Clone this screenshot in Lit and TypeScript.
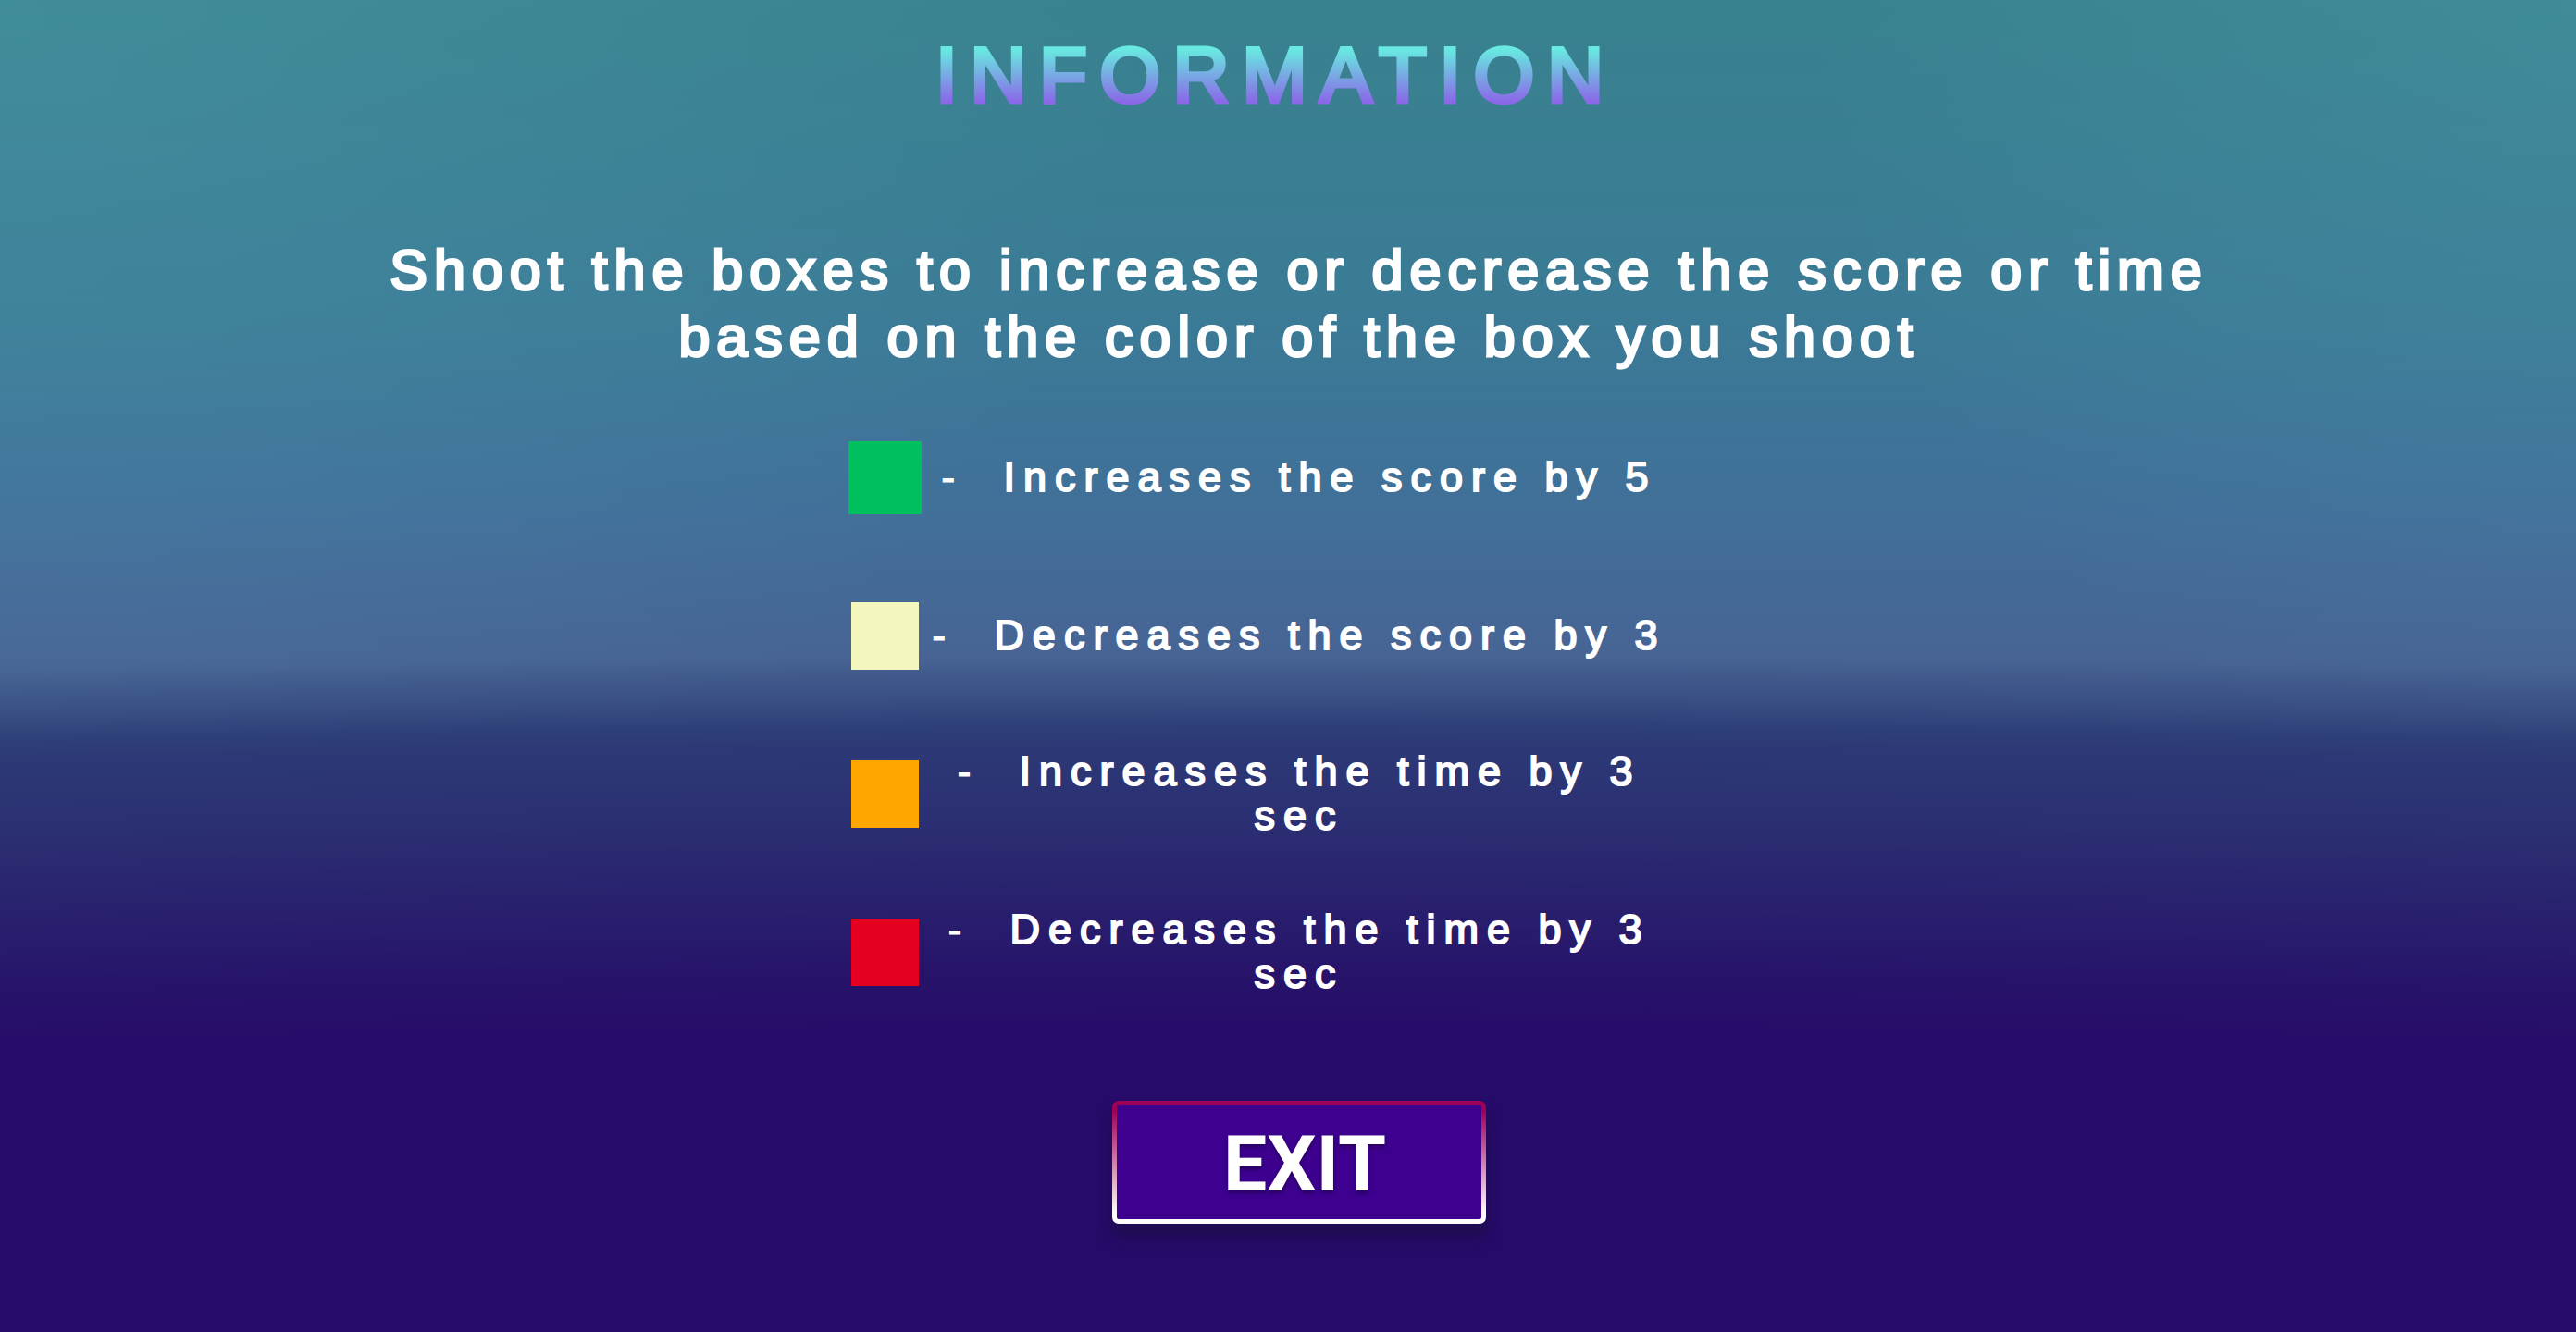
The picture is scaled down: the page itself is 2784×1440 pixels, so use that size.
import { LitElement, html, css } from "lit";
import { customElement } from "lit/decorators.js";
import { classMap } from "lit/directives/class-map.js";

interface Rule {
  tone: "green" | "cream" | "orange" | "red";
  text: string;
}

const RULES: Rule[] = [
  { tone: "green", text: "Increases the score by 5" },
  { tone: "cream", text: "Decreases the score by 3" },
  { tone: "orange", text: "Increases the time by 3 sec" },
  { tone: "red", text: "Decreases the time by 3 sec" },
];

@customElement("app-root")
export class AppRoot extends LitElement {
  static styles = css`
    :host {
      display: block;
    }
    * {
      box-sizing: border-box;
    }
    .screen {
      min-height: 100vh;
      display: flex;
      flex-direction: column;
      align-items: center;
      padding: 33px 0 48px 24px;
      color: #fff;
      font-family: "Liberation Sans", Arial, sans-serif;
      background:
        radial-gradient(
          circle 56000px at 50% 56775px,
          #260b69 55650px,
          #27136a 55720px,
          #29226e 55810px,
          #2b2f73 55890px,
          #2d3a76 55975px,
          #2e3f78 55990px,
          rgba(54, 75, 128, 0.7) 56020px,
          rgba(61, 88, 138, 0) 56065px
        ),
        radial-gradient(ellipse 45% 70% at 0 0, rgba(120, 220, 225, 0.12), rgba(120, 220, 225, 0)),
        radial-gradient(ellipse 30% 60% at 100% 0, rgba(120, 220, 225, 0.1), rgba(120, 220, 225, 0)),
        linear-gradient(#38828f, #3b7a96 360px, #416f99 560px, #476494 710px, #3b5288 800px);
    }
    .title {
      margin: 0;
      padding-right: 50px;
      font-size: 84px;
      line-height: 96px;
      font-weight: 400;
      letter-spacing: 14px;
      color: transparent;
      -webkit-text-stroke: 5px transparent;
      background: linear-gradient(#68e8e0 22%, #8a68e8 80%);
      -webkit-background-clip: text;
      background-clip: text;
    }
    .intro {
      margin: 127px 0 0;
      width: 100%;
      max-width: 2040px;
      font-size: 61px;
      line-height: 72px;
      letter-spacing: 7px;
      text-align: center;
      -webkit-text-stroke: 3px #fff;
    }
    .rules {
      list-style: none;
      margin: 68px 0 0;
      padding: 0;
      width: 100%;
      display: flex;
      flex-direction: column;
      gap: 75px;
    }
    .rule {
      display: grid;
      grid-template-columns: 1fr minmax(0, 816px) 1fr;
      align-items: center;
      min-height: 96px;
    }
    .slot {
      display: flex;
      justify-content: center;
      justify-self: end;
      width: 80px;
    }
    .swatch {
      width: 73px;
      height: 73px;
    }
    .green {
      width: 79px;
      height: 79px;
      background: #00c05e;
    }
    .cream {
      background: #f3f7be;
    }
    .orange {
      background: #ffa600;
    }
    .red {
      background: #e50022;
    }
    .label {
      font-size: 45px;
      line-height: 48px;
      letter-spacing: 9px;
      text-align: center;
      -webkit-text-stroke: 2px #fff;
    }
    .dash {
      -webkit-text-stroke: 1px #fff;
    }
    .exit {
      margin-top: 113px;
      width: 404px;
      height: 133px;
      border: 5px solid transparent;
      border-radius: 7px;
      color: #fff;
      font-family: "Roboto", sans-serif;
      font-size: 84px;
      font-weight: 700;
      line-height: 96px;
      padding: 4px 0 0 12px;
      text-shadow: 0 3px 4px rgba(20, 0, 50, 0.5);
      background:
        linear-gradient(#3d008f, #3d008f) padding-box,
        linear-gradient(#9e0058 8%, #fff 92%) border-box;
      box-shadow: 0 14px 14px rgba(25, 15, 60, 0.6);
      cursor: pointer;
    }
  `;

  render() {
    return html`
      <main class="screen">
        <h1 class="title">INFORMATION</h1>
        <p class="intro">
          Shoot the boxes to increase or decrease the score or time based on the
          color of the box you shoot
        </p>
        <ul class="rules">
          ${RULES.map(
            (rule) => html`
              <li class="rule">
                <span class="slot">
                  <span class=${classMap({ swatch: true, [rule.tone]: true })}></span>
                </span>
                <span class="label"><span class="dash">-</span>&nbsp; ${rule.text}</span>
              </li>
            `,
          )}
        </ul>
        <button class="exit" type="button">EXIT</button>
      </main>
    `;
  }
}
